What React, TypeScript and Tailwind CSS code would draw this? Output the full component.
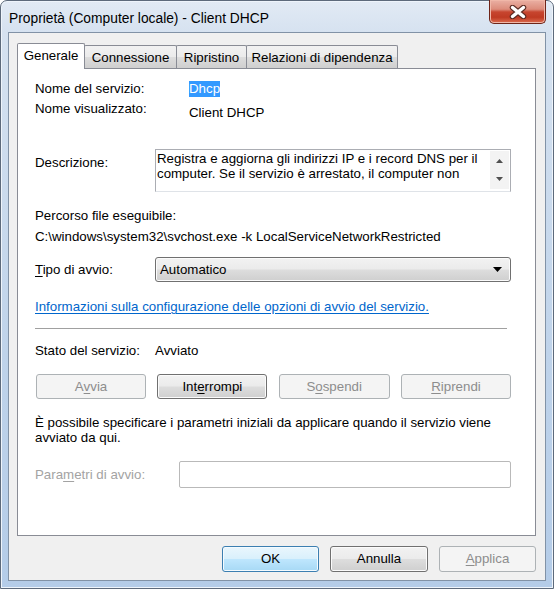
import React from "react";

type Variant = "normal" | "disabled" | "default";

const variants: Record<Variant, string> = {
  normal:
    "border-[#707070] bg-[linear-gradient(180deg,#f2f2f2_0%,#ebebeb_48%,#dddddd_52%,#cfcfcf_100%)] text-black shadow-[inset_0_0_0_1px_#fbfbfb]",
  disabled: "border-[#adb2b5] bg-[#f4f4f4] text-[#8d8d8d]",
  default:
    "border-[#3c7fb1] bg-[linear-gradient(180deg,#eaf6fd_0%,#d9f0fc_48%,#bee6fd_52%,#a7d9f5_100%)] text-black shadow-[inset_0_0_0_1px_#f4fbff]",
};

const U: React.FC<{ children: React.ReactNode }> = ({ children }) => (
  <span className="underline decoration-1 underline-offset-[2px]">{children}</span>
);

const Btn: React.FC<{ variant: Variant; className?: string; children: React.ReactNode }> = ({
  variant,
  className = "",
  children,
}) => (
  <div
    className={`flex items-center justify-center rounded-[3px] border leading-none ${variants[variant]} ${className}`}
  >
    {children}
  </div>
);

const Tab: React.FC<{ label: string; active?: boolean; className?: string }> = ({
  label,
  active,
  className = "",
}) =>
  active ? (
    <div
      className={`relative z-10 -mb-px flex h-[26px] items-center justify-center rounded-t-[2px] border border-b-0 border-[#898c95] bg-white pb-[2px] ${className}`}
    >
      {label}
    </div>
  ) : (
    <div
      className={`-ml-px flex h-[23px] items-center justify-center rounded-t-[2px] border border-b-0 border-[#898c95] bg-[linear-gradient(180deg,#f2f2f2_0%,#ebebeb_50%,#dddddd_51%,#cfcfcf_100%)] pt-px ${className}`}
    >
      {label}
    </div>
  );

const CloseButton: React.FC = () => (
  <div className="mt-[-1px] flex h-[24px] w-[57px] items-center justify-center rounded-b-[5px] border border-t-0 border-[#6e2418] bg-[linear-gradient(180deg,#eab0a4_0%,#dc8c7b_40%,#c7452f_52%,#bf3a23_75%,#dc6c50_100%)] shadow-[inset_0_0_0_1px_#f0b7a8]">
    <svg width="18" height="14" viewBox="0 0 18 14">
      <path d="M3.5 2.5 L14.5 11.5 M14.5 2.5 L3.5 11.5" stroke="#5a2a22" strokeWidth="5.5" strokeLinecap="round" />
      <path d="M3.5 2.5 L14.5 11.5 M14.5 2.5 L3.5 11.5" stroke="#ffffff" strokeWidth="3.4" strokeLinecap="round" />
    </svg>
  </div>
);

export default function App() {
  return (
    <div className="h-[589px] w-[554px] overflow-hidden font-['Liberation_Sans',Arial,sans-serif] text-[13.3px] text-black">
      <div className="flex h-full w-full flex-col rounded-t-[7px] border border-[#5d6a7b] bg-[linear-gradient(180deg,#e2eaf4_0px,#d6e2f0_31px,#bfd3ea_60%,#b4cce8_100%)] px-[7px] shadow-[inset_0_0_0_1px_#eef4fb]">
        {/* title bar */}
        <div className="flex h-[31px] shrink-0 items-start justify-between">
          <span className="ml-px mt-[10px] text-[13.8px] leading-[16px] text-black">
            Proprietà (Computer locale) - Client DHCP
          </span>
          <CloseButton />
        </div>

        {/* client area */}
        <div className="flex h-[549px] shrink-0 flex-col border border-[#8192a6] bg-[#f0f0f0] pb-[8px] pl-[8px] pr-[9px] pt-[10px]">
          <div className="flex h-[25px] items-end">
            <Tab label="Generale" active className="w-[68px]" />
            <Tab label="Connessione" className="w-[93px]" />
            <Tab label="Ripristino" className="w-[71px]" />
            <Tab label="Relazioni di dipendenza" className="w-[152px]" />
          </div>

          <div className="flex h-[468px] flex-col border border-[#898c95] bg-white pl-[17px] pr-[24px] leading-[16px]">
            <div className="mt-[12px] flex h-[16px] items-center">
              <span className="w-[154px]">Nome del servizio:</span>
              <span className="bg-[#3399ff] text-white">Dhcp</span>
            </div>

            <div className="mt-[4px] flex h-[20px] items-start">
              <span className="w-[154px]">Nome visualizzato:</span>
              <span className="mt-[4px]">Client DHCP</span>
            </div>

            <div className="mt-[28px] flex h-[43px] items-start">
              <span className="mt-[6px] w-[120px]">Descrizione:</span>
              <div className="flex h-full flex-1 border border-[#abadb3] border-b-[#dfe3e8]">
                <div className="flex-1 pl-[1px] pt-px leading-[15px] whitespace-nowrap">
                  <div>Registra e aggiorna gli indirizzi IP e i record DNS per il</div>
                  <div>computer. Se il servizio è arrestato, il computer non</div>
                </div>
                <div className="mb-[2px] mr-px mt-px flex w-[19px] flex-col items-center justify-between bg-[#f3f3f3] py-[8px]">
                  <svg width="7" height="4" viewBox="0 0 7 4">
                    <path d="M0 4 L3.5 0 L7 4 Z" fill="#505050" />
                  </svg>
                  <svg width="7" height="4" viewBox="0 0 7 4">
                    <path d="M0 0 L7 0 L3.5 4 Z" fill="#505050" />
                  </svg>
                </div>
              </div>
            </div>

            <div className="mt-[16px]">Percorso file eseguibile:</div>
            <div className="mt-[5px] whitespace-nowrap">
              C:\windows\system32\svchost.exe -k LocalServiceNetworkRestricted
            </div>

            <div className="mt-[12px] flex h-[25px] items-center">
              <span className="w-[120px]">
                <U>T</U>ipo di avvio:
              </span>
              <div className="flex h-full flex-1 items-center justify-between rounded-[3px] border border-[#707070] bg-[linear-gradient(180deg,#f2f2f2_0%,#ebebeb_48%,#dddddd_52%,#cfcfcf_100%)] pl-[4px] pr-[8px] shadow-[inset_0_0_0_1px_#fbfbfb]">
                <span>Automatico</span>
                <svg width="9" height="5" viewBox="0 0 9 5">
                  <path d="M0 0 L9 0 L4.5 5 Z" fill="#000000" />
                </svg>
              </div>
            </div>

            <div className="mt-[17px] text-[#0066cc] underline decoration-1 underline-offset-[2px]">
              Informazioni sulla configurazione delle opzioni di avvio del servizio.
            </div>

            <div className="mr-[4px] mt-[13px] h-px bg-[#a0a0a0]" />

            <div className="mt-[14px] flex">
              <span className="w-[120px]">Stato del servizio:</span>
              <span>Avviato</span>
            </div>

            <div className="mt-[15px] flex h-[25px] justify-between pl-px">
              <Btn variant="disabled" className="w-[110px]">
                A<U>v</U>via
              </Btn>
              <Btn variant="normal" className="w-[110px]">
                Int<U>e</U>rrompi
              </Btn>
              <Btn variant="disabled" className="w-[111px]">
                S<U>o</U>spendi
              </Btn>
              <Btn variant="disabled" className="w-[110px]">
                <U>R</U>iprendi
              </Btn>
            </div>

            <div className="mt-[16px] leading-[15px] whitespace-nowrap">
              È possibile specificare i parametri iniziali da applicare quando il servizio viene
              <br />
              avviato da qui.
            </div>

            <div className="mt-[16px] flex h-[27px] items-center">
              <span className="w-[144px] text-[#a3a3a3]">
                Para<U>m</U>etri di avvio:
              </span>
              <div className="h-full flex-1 rounded-[2px] border border-[#b9b9b9] bg-white" />
            </div>
          </div>

          <div className="mt-[10px] flex h-[26px] justify-end gap-[11px]">
            <Btn variant="default" className="w-[97px]">
              OK
            </Btn>
            <Btn variant="normal" className="w-[98px]">
              Annulla
            </Btn>
            <Btn variant="disabled" className="w-[97px]">
              <U>A</U>pplica
            </Btn>
          </div>
        </div>
      </div>
    </div>
  );
}
